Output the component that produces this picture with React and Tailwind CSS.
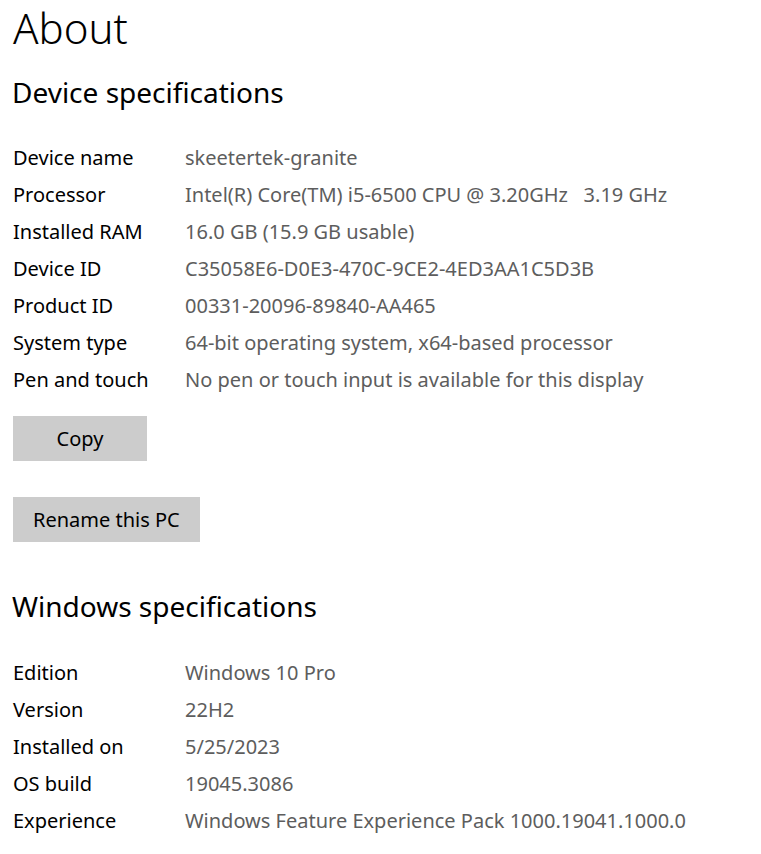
const deviceSpecs = [
  ['Device name', 'skeetertek-granite'],
  ['Processor', 'Intel(R) Core(TM) i5-6500 CPU @ 3.20GHz   3.19 GHz'],
  ['Installed RAM', '16.0 GB (15.9 GB usable)'],
  ['Device ID', 'C35058E6-D0E3-470C-9CE2-4ED3AA1C5D3B'],
  ['Product ID', '00331-20096-89840-AA465'],
  ['System type', '64-bit operating system, x64-based processor'],
  ['Pen and touch', 'No pen or touch input is available for this display'],
];

const windowsSpecs = [
  ['Edition', 'Windows 10 Pro'],
  ['Version', '22H2'],
  ['Installed on', '5/25/2023'],
  ['OS build', '19045.3086'],
  ['Experience', 'Windows Feature Experience Pack 1000.19041.1000.0'],
];

function SpecTable({ rows }) {
  return (
    <div className="grid grid-cols-[172px_1fr] text-[20px] leading-[37px]">
      {rows.map(([label, value]) => (
        <div key={label} className="contents">
          <div className="text-black">{label}</div>
          <div className="text-[#5d5d5d] whitespace-pre">{value}</div>
        </div>
      ))}
    </div>
  );
}

export default function App() {
  return (
    <div
      className="min-h-screen bg-white pl-[13px] text-black"
      style={{ fontFamily: '"Noto Sans", "Open Sans", sans-serif' }}>
      <h1 className="text-[42px] leading-[56px] font-light">About</h1>

      <h2 className="mt-[16px] -ml-px text-[28px] leading-[40px]">
        Device specifications
      </h2>
      <div className="mt-[27px]">
        <SpecTable rows={deviceSpecs} />
      </div>

      <div className="flex flex-col items-start">
        <button className="mt-[18px] h-[45px] w-[134px] bg-[#cccccc] text-[20px]">
          Copy
        </button>
        <button className="mt-[36px] h-[45px] px-[20px] bg-[#cccccc] text-[20px]">
          Rename this PC
        </button>
      </div>

      <h2 className="mt-[44px] -ml-px text-[28px] leading-[40px]">
        Windows specifications
      </h2>
      <div className="mt-[28px]">
        <SpecTable rows={windowsSpecs} />
      </div>
    </div>
  );
}
